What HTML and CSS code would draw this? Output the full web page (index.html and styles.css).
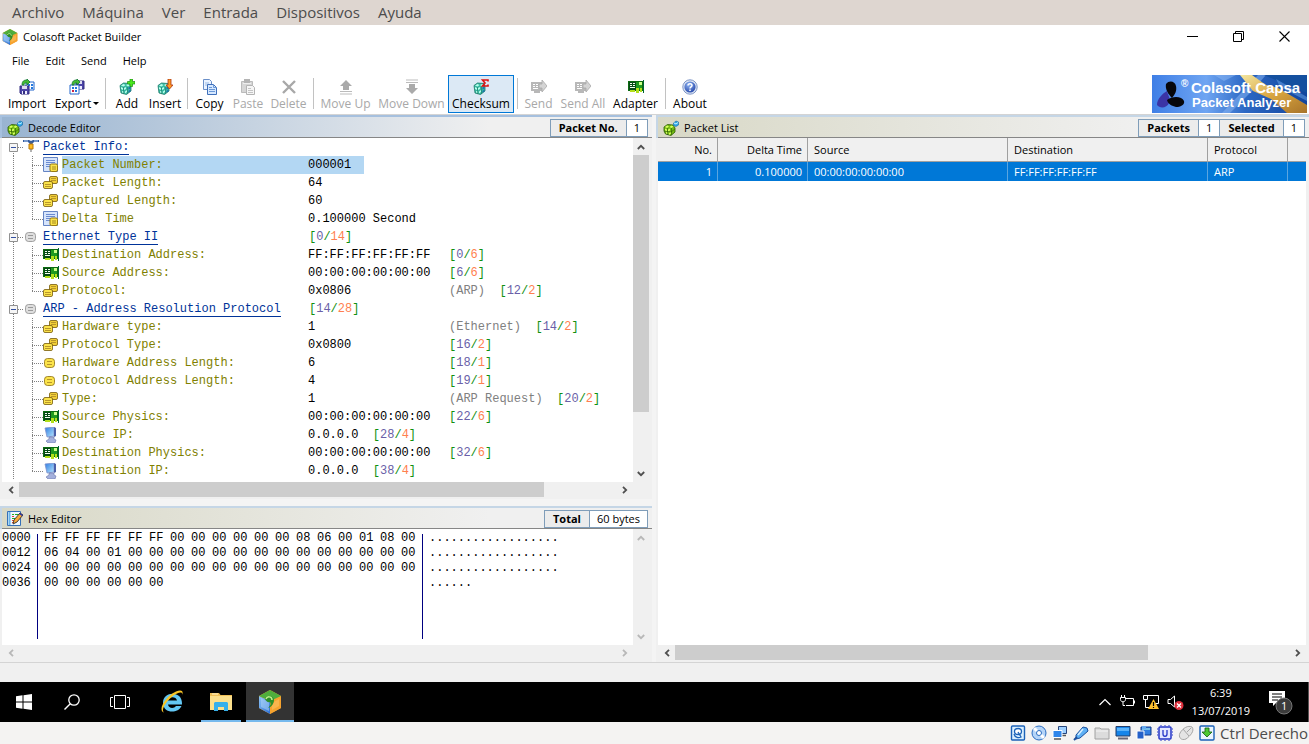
FILE: index.html
```html
<!DOCTYPE html>
<html lang="es">
<head>
<meta charset="utf-8">
<meta name="viewport" content="width=device-width, initial-scale=1">
<title>Colasoft Packet Builder</title>
<link rel="stylesheet" href="styles.css">
</head>
<body>
<svg class="defs" aria-hidden="true">
  <defs>
    <linearGradient id="g-app-l" x1="0" y1="0" x2="1" y2="1"><stop offset="0" stop-color="#8fc4f5"/><stop offset="1" stop-color="#2a6fd6"/></linearGradient>
    <linearGradient id="g-mon" x1="0" y1="0" x2="1" y2="1"><stop offset="0" stop-color="#2c7be0"/><stop offset="1" stop-color="#b7e6ff"/></linearGradient>
    <radialGradient id="g-about" cx=".4" cy=".3" r=".8"><stop offset="0" stop-color="#8fb4f2"/><stop offset="1" stop-color="#1d3fa5"/></radialGradient>
    <linearGradient id="g-gold" x1="0" y1="0" x2="1" y2="1"><stop offset="0" stop-color="#f3e6a0"/><stop offset=".5" stop-color="#d9a640"/><stop offset="1" stop-color="#a8742a"/></linearGradient>
    <linearGradient id="g-blue" x1="0" y1="0" x2="1" y2="0"><stop offset="0" stop-color="#3f7fe6"/><stop offset=".35" stop-color="#6fa5f2"/><stop offset=".6" stop-color="#2c68c4"/><stop offset="1" stop-color="#12459c"/></linearGradient>
  </defs>
  <symbol id="i-app" viewBox="0 0 24 24">
    <path d="M12 0 23 6v12l-11 6L1 18V6z" fill="#f49a28"/>
    <path d="M1 6l11 5v13L1 18z" fill="url(#g-app-l)"/>
    <path d="M23 6l-11 5v13l11-6z" fill="#f6a32f"/>
    <path d="M12 0 23 6l-11 5L1 6z" fill="#4fae3c"/>
    <path d="M3 8l8 4v9l-8-4z" fill="#b4d8fa" opacity=".5"/>
    <path d="M14 13l7-4v7l-7 4z" fill="#ffd07a" opacity=".4"/>
    <path d="M7 9c0-4 9-4 9 1 0 3-2 7-6 8 3-3 3-4 2-6-2 1-4-1-5-3z" fill="#2e8f2a"/>
    <path d="M8 9c1-3 6-3 6 1" stroke="#bdf08c" stroke-width="1.500" fill="none"/>
  </symbol>
  <symbol id="s-cube" viewBox="0 0 16 16">
    <path d="M1 6.500L4.500 4 11 4.500 12 8v4l-4.500 3.500L2 14z" fill="#36b8a0" stroke="#1c7a6a" stroke-width=".8"/>
    <path d="M2 6.500L4.500 5l2 1-2 1.500zM7 6l2-1 2 1-2 1.500zM2 8l2 1v2l-2-1zM5 9l2-1v2l-2 1zM3 12l2 .5V14l-2-.5zM6 12.500L8 11v2l-2 1.500z" fill="#b8ffec"/>
    <path d="M9.500 8.500l2-1v2l-2 1zM9.500 12l2-1.500v2l-2 1z" fill="#1c70b0"/>
    <path d="M4.500 8v7M8.500 8v7" stroke="#1c7a6a" stroke-width=".6"/>
  </symbol>
  <symbol id="i-cubes" viewBox="0 0 16 16">
    <path d="M1 7l3.500-2.500L10 5l2 3v4l-4 3.500L2.500 14 1 11z" fill="#74bc12" stroke="#2c5a04" stroke-width=".8"/>
    <path d="M2 7l2-1.500 2 1-2 1.500zM6.500 7l2-1.500 2 1-2 1.500zM2 8.500l2 1v2l-2-1zM5 9.500l2-1v2l-2 1zM3 12l2 .5V14l-2-.5zM6 13l2-1.500v2L6 15z" fill="#d8ff60"/>
    <path d="M4.500 8v7M8.500 8v7M1 11l7 1 4-3" stroke="#2c5a04" stroke-width=".6" fill="none"/>
    <path d="M10.500 3L13 1l2.500 1v3L13 6.500l-2.500-1z" fill="#2ea6e8" stroke="#186aa0" stroke-width=".6"/>
    <path d="M11 3l2 1 2-1.500" stroke="#c8f4ff" fill="none"/>
  </symbol>
  <symbol id="i-import" viewBox="0 0 16 16">
    <path d="M7 3h8v8H7z" fill="#fff" stroke="#26c"/>
    <path d="M9 5h2v2H9zM12 5h2v2h-2zM12 8h2v2h-2z" fill="#27d"/>
    <path d="M1 7h9v8H2l-1-1z" fill="#4c44a8" stroke="#332c80"/><path d="M3 7h5v3H3z" fill="#dde"/><path d="M3 12h5v3H3z" fill="#eef"/><path d="M4 12h2v3H4z" fill="#332c80"/>
    <path d="M3 6c0-4 2-5 5-5V0l3 3-3 3V4C6 4 5 4 5 6z" fill="#4b3" stroke="#173" stroke-width=".8"/>
  </symbol>
  <symbol id="i-export" viewBox="0 0 16 16">
    <path d="M7 2h8v8H8L7 9z" fill="#4c44a8" stroke="#332c80"/><path d="M9 2h4v3H9z" fill="#dde"/><path d="M9 7h4v3H9z" fill="#eef"/>
    <path d="M1 6h9v9H1z" fill="#fff" stroke="#26c"/>
    <path d="M3 8h2v2H3zM6 8h2v2H6zM6 11h2v2H6z" fill="#27d"/><path d="M3 11h2v2H3z" fill="#c24"/>
    <path d="M3 6c0-4 2-5 5-5V0l3 3-3 3V4C6 4 5 4 5 6z" fill="#4b3" stroke="#173" stroke-width=".8"/>
  </symbol>
  <symbol id="i-add" viewBox="0 0 16 16"><use href="#s-cube" width="16" height="16"/><path d="M11 0h2.500v2.500H16V5h-2.500v2.500H11V5H8.500V2.500H11z" fill="#4be81c" stroke="#1a8a12" stroke-width=".7"/></symbol>
  <symbol id="i-insert" viewBox="0 0 16 16"><use href="#s-cube" width="16" height="16"/><path d="M11 0h3v6h2l-3.500 4L9 6h2z" fill="#f92" stroke="#a31" stroke-width=".8"/></symbol>
  <symbol id="i-sum" viewBox="0 0 16 16"><use href="#s-cube" width="16" height="16"/><path d="M15 2.500V1H9.500l2.500 3-2.500 3H15V5.500" fill="none" stroke="#d11" stroke-width="1.600"/></symbol>
  <symbol id="i-copy" viewBox="0 0 16 16"><path d="M1.500.5h6l2 2v8h-8z" fill="#eaf3ff" stroke="#6a8fc8"/><path d="M3 4h4M3 6h4" stroke="#9bbbe6"/><path d="M5.500 5.500h6l3 3v7h-9z" fill="#d6e8ff" stroke="#3f70bb"/><path d="M11.500 5.500v3h3M7 8.500h3M7 10.500h6M7 12.500h6" stroke="#6b99d8" fill="none"/></symbol>
  <symbol id="i-paste" viewBox="0 0 16 16"><path d="M1.500 2.500h11v11h-11z" fill="#d6d6d6" stroke="#bbb"/><path d="M4 0h6v4H4z" fill="#b4b4b4"/><path d="M3 4h8v1H3z" fill="#eee"/><path d="M6.500 6.500h6l2 2v7h-8z" fill="#f6f6f6" stroke="#b4b4b4"/><path d="M8 9.500h3M8 11.500h5M8 13.500h5" stroke="#c4c4c4"/></symbol>
  <symbol id="i-del" viewBox="0 0 16 16"><path d="M2 2l12 12M14 2L2 14" stroke="#a8a8a8" stroke-width="2.400"/></symbol>
  <symbol id="i-up" viewBox="0 0 16 16"><path d="M8 1l6 6h-3v4H5V7H2z" fill="#aaa"/><path d="M2 12.500h12M2 15h12" stroke="#bbb"/></symbol>
  <symbol id="i-down" viewBox="0 0 16 16"><path d="M8 15l6-6h-3V5H5v4H2z" fill="#aaa"/><path d="M2 1h12M2 3.500h12" stroke="#bbb"/></symbol>
  <symbol id="i-send" viewBox="0 0 16 16"><path d="M0 3h12v9H0z" fill="#b8b8b8"/><path d="M2 5h2v1H2zM5 5h2v1H5zM2 7h2v1H2zM5 7h2v1H5zM2 9h5v1H2z" fill="#fff"/><path d="M8 5h3V1l5 6-5 6V9H8z" fill="#d4d4d4" stroke="#a8a8a8" stroke-width=".8"/><path d="M3 12h6v2H3z" fill="#b8b8b8"/></symbol>
  <symbol id="i-card" viewBox="0 0 16 16"><path d="M0 2h15v10H0z" fill="#0c6a10"/><path d="M1 3h13v8H1z" fill="#1f9a1f"/><path d="M1 3h7v8H1z" fill="#064a16"/><path d="M2 4h2v1H2zM5 4h2v1H5zM2 6h2v1H2zM5 6h2v1H5zM2 8h5v1H2z" fill="#f4fff0"/><path d="M11 3h3v3h-3z" fill="#cf8"/><path d="M2 11h5v2H2zM8 9h3v5H8zM12 9h2v4h-2z" fill="#b3e01c"/><path d="M15 1h1v13h-1z" fill="#063"/></symbol>
  <symbol id="i-about" viewBox="0 0 16 16"><circle cx="8" cy="8" r="7.200" fill="#dfe7f5" stroke="#7d95c6"/><circle cx="8" cy="8" r="5.600" fill="url(#g-about)"/><path d="M6 6.500C6 4 10.200 4 10 6.500c0 1.300-2 1.400-2 3M8 10.500V12" fill="none" stroke="#fff" stroke-width="1.500"/></symbol>
  <symbol id="i-hexed" viewBox="0 0 16 16"><path d="M.5.5h13v14H.5z" fill="#eef6ff" stroke="#3570b8"/><path d="M2.500 1v13" stroke="#6bb4e8" stroke-width="2"/><path d="M5 3.500h2M8 3.500h4M5 7.500h3" stroke="#2a2"/><path d="M5 5.500h2M5 9.500h2M5 11.500h4" stroke="#d43"/><path d="M6 13l1-4 6-7 3 2-6 7z" fill="#f9a83a" stroke="#333" stroke-width=".9"/><path d="M12.500 2.500l3 2" stroke="#23a" stroke-width="1.500"/></symbol>
  <symbol id="i-tee" viewBox="0 0 16 16"><path d="M0 1h6l2 1 2-1h6v2h-5l-2 2H7L5 3H0z" fill="#345b9c"/><path d="M1 2h4M11 2h4" stroke="#bcd8ff"/><path d="M6 5h4v5H6z" fill="#fb2" stroke="#b87808"/><path d="M7.500 3h1v2h-1zM7.500 10h1v3h-1z" fill="#666"/></symbol>
  <symbol id="i-doc" viewBox="0 0 16 16"><path d="M.5.5h14v14H.5z" fill="#d6e4fb" stroke="#6584c4"/><path d="M3 3.500h9M3 5.500h9M3 7.500h9M3 9.500h4" stroke="#6b8bd0"/><rect x="7" y="7" width="7.500" height="7.500" rx="1.500" fill="#fbe34a" stroke="#987a10"/><path d="M9 10h4M9 12h4" stroke="#a58a20"/></symbol>
  <symbol id="i-two" viewBox="0 0 16 16"><rect x="6.500" y="1.500" width="8" height="7" rx="1.500" fill="#f2cf36" stroke="#755b0c" stroke-width=".8"/><path d="M8 3.500h5M8 5.500h5" stroke="#b8962a"/><rect x=".5" y="6.500" width="9" height="7" rx="1.500" fill="#fbe34a" stroke="#755b0c" stroke-width=".8"/><path d="M2 9.500h6M2 11.500h6" stroke="#b8962a"/></symbol>
  <symbol id="i-one" viewBox="0 0 16 16"><rect x="1.500" y="3.500" width="10" height="9" rx="3" fill="#fbe34a" stroke="#8a6c10" stroke-width=".8"/><path d="M4 6.500h5M4 9.500h5" stroke="#b8962a"/></symbol>
  <symbol id="i-grey" viewBox="0 0 16 16"><rect x="2.500" y="3.500" width="10" height="9" rx="3" fill="#dedede" stroke="#8c8c8c" stroke-width=".8"/><path d="M5 6.500h5M5 9.500h5" stroke="#999"/></symbol>
  <symbol id="i-pc" viewBox="0 0 16 16"><path d="M2 1l9-1v9l-7 1z" fill="url(#g-mon)" stroke="#7d90cc" stroke-width=".8"/><path d="M11 0l2 1v8l-2 1z" fill="#4a5fa8"/><path d="M6 10h5v2l2 1-1 3H5l-2-2 3-2z" fill="#a4b0dc" stroke="#6a76ac" stroke-width=".6"/></symbol>
  <symbol id="i-minus" viewBox="0 0 9 9"><path d="M.5.5h8v8h-8z" fill="#f6f6f6" stroke="#919191"/><path d="M2 4.500h5" stroke="#3350a0"/></symbol>
  <symbol id="i-chev" viewBox="0 0 8 8"><path d="M.8 6L4 2.800 7.200 6" fill="none" stroke="currentColor" stroke-width="1.800"/></symbol>
</svg>

<nav class="vm-menu" aria-label="Máquina virtual">
  <a href="#">Archivo</a><a href="#">Máquina</a><a href="#">Ver</a><a href="#">Entrada</a><a href="#">Dispositivos</a><a href="#">Ayuda</a>
</nav>

<main class="app">
  <header class="titlebar">
    <svg class="ico16"><use href="#i-app"/></svg>
    <h1>Colasoft Packet Builder</h1>
    <div class="win-buttons">
      <button aria-label="Minimize"><svg width="11" height="11"><path d="M0 5.500h11" stroke="#000"/></svg></button>
      <button aria-label="Restore"><svg width="11" height="11"><path d="M.5 2.500h8v8h-8zM2.500 2.500v-2h8v8h-2" fill="none" stroke="#000"/></svg></button>
      <button aria-label="Close"><svg width="11" height="11"><path d="M.5.500l10 10M10.500.500l-10 10" stroke="#000" stroke-width="1.100"/></svg></button>
    </div>
  </header>

  <nav class="menu" aria-label="Menu"><a href="#">File</a><a href="#">Edit</a><a href="#">Send</a><a href="#">Help</a></nav>

  <div class="toolbar" role="toolbar">
    <button><svg class="ico16"><use href="#i-import"/></svg><span>Import</span></button>
    <button><svg class="ico16"><use href="#i-export"/></svg><span class="drop">Export</span></button>
    <i class="sep"></i>
    <button><svg class="ico16"><use href="#i-add"/></svg><span>Add</span></button>
    <button><svg class="ico16"><use href="#i-insert"/></svg><span>Insert</span></button>
    <i class="sep"></i>
    <button><svg class="ico16"><use href="#i-copy"/></svg><span>Copy</span></button>
    <button disabled><svg class="ico16"><use href="#i-paste"/></svg><span>Paste</span></button>
    <button disabled><svg class="ico16"><use href="#i-del"/></svg><span>Delete</span></button>
    <i class="sep"></i>
    <button disabled><svg class="ico16"><use href="#i-up"/></svg><span>Move Up</span></button>
    <button disabled><svg class="ico16"><use href="#i-down"/></svg><span>Move Down</span></button>
    <button class="pressed" aria-pressed="true"><svg class="ico16"><use href="#i-sum"/></svg><span>Checksum</span></button>
    <i class="sep"></i>
    <button disabled><svg class="ico16"><use href="#i-send"/></svg><span>Send</span></button>
    <button disabled><svg class="ico16"><use href="#i-send"/></svg><span>Send All</span></button>
    <button><svg class="ico16"><use href="#i-card"/></svg><span>Adapter</span></button>
    <i class="sep"></i>
    <button><svg class="ico16"><use href="#i-about"/></svg><span>About</span></button>
    <svg class="brand" width="155" height="38" viewBox="0 0 155 38" role="img" aria-label="Colasoft Capsa Packet Analyzer">
      <rect width="155" height="38" fill="url(#g-blue)"/>
      <path d="M62 0l10 6 12-6zM78 38l22-22 14-16h-8L70 38z" fill="#8dbaf5" opacity=".5"/>
      <path d="M88 0h12l14 10 12 3 29 17v8h-20l-16-14-18-8z" fill="url(#g-gold)"/>
      <path d="M112 0h43v18l-22-9z" fill="#14509f"/>
      <path d="M124 4l31 18v4l-27-14z" fill="#5f9ae0" opacity=".6"/>
      <path d="M14 9c3-4 9-3 10 2 1 5-1 8-4 12-4-4-7-9-6-14z" fill="#07070c"/>
      <path d="M15 16c1 5 4 7 2 12-2 5-9 6-12 2 0-6 5-11 10-14z" fill="#3b34a6"/>
      <path d="M15 25c5-4 15-4 17 1 1 4-4 6-8 6-4-1-8-3-9-7z" fill="#07070c"/>
      <text class="brand-r" x="29" y="12">®</text>
      <text class="brand-a" x="39" y="18">Colasoft Capsa</text>
      <text class="brand-b" x="40" y="32">Packet Analyzer</text>
    </svg>
  </div>

  <div class="work">
    <div class="left">
      <section class="panel decode">
        <div class="phead active">
          <svg class="ico16"><use href="#i-cubes"/></svg><h2>Decode Editor</h2>
          <dl class="badge"><dt>Packet No.</dt><dd>1</dd></dl>
        </div>
        <div class="pane">
          <ul class="tree" role="tree">
            <li class="node root first"><svg class="box"><use href="#i-minus"/></svg><svg class="ico16"><use href="#i-tee"/></svg><span class="name">Packet Info:</span></li>
            <li class="node leaf sel"><svg class="ico16"><use href="#i-doc"/></svg><span class="name">Packet Number:</span><span class="val">000001</span></li>
            <li class="node leaf"><svg class="ico16"><use href="#i-two"/></svg><span class="name">Packet Length:</span><span class="val">64</span></li>
            <li class="node leaf"><svg class="ico16"><use href="#i-two"/></svg><span class="name">Captured Length:</span><span class="val">60</span></li>
            <li class="node leaf end"><svg class="ico16"><use href="#i-doc"/></svg><span class="name">Delta Time</span><span class="val">0.100000 Second</span></li>
            <li class="node root"><svg class="box"><use href="#i-minus"/></svg><svg class="ico16"><use href="#i-grey"/></svg><span class="name">Ethernet Type II</span><span class="val"><i>[<b>0</b>/<em>14</em>]</i></span></li>
            <li class="node leaf"><svg class="ico16"><use href="#i-card"/></svg><span class="name">Destination Address:</span><span class="val">FF:FF:FF:FF:FF:FF</span><span class="val"><i>[<b>0</b>/<em>6</em>]</i></span></li>
            <li class="node leaf"><svg class="ico16"><use href="#i-card"/></svg><span class="name">Source Address:</span><span class="val">00:00:00:00:00:00</span><span class="val"><i>[<b>6</b>/<em>6</em>]</i></span></li>
            <li class="node leaf end"><svg class="ico16"><use href="#i-two"/></svg><span class="name">Protocol:</span><span class="val">0x0806</span><span class="val"><s>(ARP)</s>  <i>[<b>12</b>/<em>2</em>]</i></span></li>
            <li class="node root"><svg class="box"><use href="#i-minus"/></svg><svg class="ico16"><use href="#i-grey"/></svg><span class="name">ARP - Address Resolution Protocol</span><span class="val"><i>[<b>14</b>/<em>28</em>]</i></span></li>
            <li class="node leaf"><svg class="ico16"><use href="#i-two"/></svg><span class="name">Hardware type:</span><span class="val">1</span><span class="val"><s>(Ethernet)</s>  <i>[<b>14</b>/<em>2</em>]</i></span></li>
            <li class="node leaf"><svg class="ico16"><use href="#i-two"/></svg><span class="name">Protocol Type:</span><span class="val">0x0800</span><span class="val"><i>[<b>16</b>/<em>2</em>]</i></span></li>
            <li class="node leaf"><svg class="ico16"><use href="#i-one"/></svg><span class="name">Hardware Address Length:</span><span class="val">6</span><span class="val"><i>[<b>18</b>/<em>1</em>]</i></span></li>
            <li class="node leaf"><svg class="ico16"><use href="#i-one"/></svg><span class="name">Protocol Address Length:</span><span class="val">4</span><span class="val"><i>[<b>19</b>/<em>1</em>]</i></span></li>
            <li class="node leaf"><svg class="ico16"><use href="#i-two"/></svg><span class="name">Type:</span><span class="val">1</span><span class="val"><s>(ARP Request)</s>  <i>[<b>20</b>/<em>2</em>]</i></span></li>
            <li class="node leaf"><svg class="ico16"><use href="#i-card"/></svg><span class="name">Source Physics:</span><span class="val">00:00:00:00:00:00</span><span class="val"><i>[<b>22</b>/<em>6</em>]</i></span></li>
            <li class="node leaf"><svg class="ico16"><use href="#i-pc"/></svg><span class="name">Source IP:</span><span class="val">0.0.0.0  <i>[<b>28</b>/<em>4</em>]</i></span></li>
            <li class="node leaf"><svg class="ico16"><use href="#i-card"/></svg><span class="name">Destination Physics:</span><span class="val">00:00:00:00:00:00</span><span class="val"><i>[<b>32</b>/<em>6</em>]</i></span></li>
            <li class="node leaf end"><svg class="ico16"><use href="#i-pc"/></svg><span class="name">Destination IP:</span><span class="val">0.0.0.0  <i>[<b>38</b>/<em>4</em>]</i></span></li>
          </ul>
          <div class="vbar"><button aria-label="Scroll up"><svg class="chev"><use href="#i-chev"/></svg></button><div class="track"><div class="thumb tall"></div></div><button aria-label="Scroll down"><svg class="chev down"><use href="#i-chev"/></svg></button></div>
        </div>
        <div class="hbar"><button aria-label="Scroll left"><svg class="chev lft"><use href="#i-chev"/></svg></button><div class="track"><div class="thumb wide"></div></div><button aria-label="Scroll right"><svg class="chev rgt"><use href="#i-chev"/></svg></button></div>
      </section>

      <section class="panel hex">
        <div class="phead">
          <svg class="ico16"><use href="#i-hexed"/></svg><h2>Hex Editor</h2>
          <dl class="badge"><dt>Total</dt><dd>60 bytes</dd></dl>
        </div>
        <div class="pane">
          <div class="dump">
            <pre class="offsets">0000
0012
0024
0036</pre>
            <div class="rule"></div>
            <div class="bytes">
              <span>FF</span><span>FF</span><span>FF</span><span>FF</span><span>FF</span><span>FF</span><span>00</span><span>00</span><span>00</span><span>00</span><span>00</span><span>00</span><span>08</span><span>06</span><span>00</span><span>01</span><span>08</span><span>00</span>
              <span>06</span><span>04</span><span>00</span><span>01</span><span>00</span><span>00</span><span>00</span><span>00</span><span>00</span><span>00</span><span>00</span><span>00</span><span>00</span><span>00</span><span>00</span><span>00</span><span>00</span><span>00</span>
              <span>00</span><span>00</span><span>00</span><span>00</span><span>00</span><span>00</span><span>00</span><span>00</span><span>00</span><span>00</span><span>00</span><span>00</span><span>00</span><span>00</span><span>00</span><span>00</span><span>00</span><span>00</span>
              <span>00</span><span>00</span><span>00</span><span>00</span><span>00</span><span>00</span>
            </div>
            <div class="rule"></div>
            <pre class="ascii">..................
..................
..................
......</pre>
          </div>
          <div class="vbar off"><button disabled aria-label="Scroll up"><svg class="chev"><use href="#i-chev"/></svg></button><div class="track"></div><button disabled aria-label="Scroll down"><svg class="chev down"><use href="#i-chev"/></svg></button></div>
        </div>
        <div class="hbar off"><button disabled aria-label="Scroll left"><svg class="chev lft"><use href="#i-chev"/></svg></button><div class="track"></div><button disabled aria-label="Scroll right"><svg class="chev rgt"><use href="#i-chev"/></svg></button></div>
      </section>
    </div>

    <section class="panel list">
      <div class="phead">
        <svg class="ico16"><use href="#i-cubes"/></svg><h2>Packet List</h2>
        <dl class="badge"><dt>Packets</dt><dd>1</dd><dt>Selected</dt><dd>1</dd></dl>
      </div>
      <div class="pane">
        <table>
          <colgroup><col class="c-no"><col class="c-time"><col class="c-addr"><col class="c-addr"><col class="c-proto"><col></colgroup>
          <thead><tr><th class="num">No.</th><th class="num">Delta Time</th><th>Source</th><th>Destination</th><th>Protocol</th><th></th></tr></thead>
          <tbody><tr><td class="num">1</td><td class="num">0.100000</td><td>00:00:00:00:00:00</td><td>FF:FF:FF:FF:FF:FF</td><td>ARP</td><td></td></tr></tbody>
        </table>
      </div>
      <div class="hbar"><button aria-label="Scroll left"><svg class="chev lft"><use href="#i-chev"/></svg></button><div class="track"><div class="thumb most"></div></div><button aria-label="Scroll right"><svg class="chev rgt"><use href="#i-chev"/></svg></button></div>
    </section>
  </div>
  <div class="status"></div>
</main>

<footer class="taskbar">
  <div class="tasks">
    <button aria-label="Start"><svg width="16" height="16"><path d="M0 2.200L6.500 1.300v6.200H0zM7.500 1.200L16 0v7.500H7.500zM0 8.500h6.500v6.200L0 13.800zM7.500 8.500H16V16l-8.500-1.200z" fill="#fff"/></svg></button>
    <button aria-label="Search"><svg width="16" height="16"><circle cx="10" cy="6" r="5.200" fill="none" stroke="#fff" stroke-width="1.300"/><path d="M6.300 9.700L.500 15.500" stroke="#fff" stroke-width="1.400"/></svg></button>
    <button aria-label="Task view"><svg width="20" height="14"><path d="M4.500.5h11v13h-11zM3 2.500H.500v9H3M17 2.500h2.500v9H17" fill="none" stroke="#fff"/></svg></button>
  </div>
  <div class="tasks">
    <button aria-label="Internet Explorer"><svg width="24" height="24"><path d="M22 14.500H8c.5 4 6 4.500 8 1.500h5.500C18 24 3 24 3 12.500 3 1 23 0 22 14.500zM8 10.500h9C16.500 6 8.500 6 8 10.500z" fill="#63c8f5" fill-rule="evenodd"/><path d="M4 22.500c-7-2 2-17 12-21 5-2 8-1 6 4 1-3-1-4-5-2C8 8 0 20 4 22.500z" fill="#f9c526"/></svg></button>
    <button class="open" aria-label="File Explorer"><svg width="22" height="20"><path d="M0 1h9l1.500 2H22v15H0z" fill="#f0c057"/><path d="M0 4h22v14H0z" fill="#fce08c"/><path d="M2 2h6" stroke="#fff6cf"/><path d="M4 19v-8l1-1h12l1 1v8h-4v-4H8v4z" fill="#36b0ea"/></svg></button>
    <button class="open current" aria-label="Colasoft Packet Builder"><svg width="24" height="24"><use href="#i-app"/></svg></button>
  </div>
  <div class="tray">
    <svg width="12" height="12"><path d="M.500 9L6 3.500 11.500 9" fill="none" stroke="#fff" stroke-width="1.200"/></svg>
    <svg width="16" height="14"><path d="M6 3.500h8.500v7H7M15.500 5.500v3M1.500 2.500v2c0 3 5 3 5 0v-2zM2.500 0v2M5.500 0v2M4 7v3.500h2" fill="none" stroke="#fff"/></svg>
    <svg width="16" height="16"><path d="M3.500 1.500h12v8h-5M.500 1.500h4v4h-4zM2.500 5v8.500h4M6 13.500h3" fill="none" stroke="#fff"/><path d="M10.500 5L16 15H5z" fill="#fdc02f"/><path d="M10.500 8v4M10.500 13v1" stroke="#000" stroke-width="1.200"/></svg>
    <svg width="17" height="16"><path d="M1 5.500h2.500L7.500 2v11L3.500 9.500H1z" fill="none" stroke="#fff"/><circle cx="12" cy="11.500" r="4.500" fill="#dc2f3c"/><path d="M10 9.500l4 4M14 9.500l-4 4" stroke="#fff" stroke-width="1.300"/></svg>
    <div class="clock"><time>6:39</time><time datetime="2019-07-13">13/07/2019</time></div>
    <svg width="26" height="26"><path d="M1 2h16v12H8l-3 3v-3H1z" fill="#fff"/><path d="M4 5h10M4 8h10M4 11h6" stroke="#000"/><circle cx="16" cy="17" r="8" fill="#3c3c3c" stroke="#777"/><text class="count" x="13" y="21">1</text></svg>
  </div>
</footer>

<footer class="vm-status">
  <svg class="ico16" viewBox="0 0 16 16"><rect x="1.500" y="1" width="13" height="14" rx="1" fill="#d9efff" stroke="#1b62b8" stroke-width="1.400"/><ellipse cx="8" cy="6.500" rx="3.500" ry="3" fill="#fff" stroke="#1b62b8" stroke-width="1.300"/><path d="M4 9c1 4 5 4 7 3L8 7" fill="none" stroke="#1b62b8" stroke-width="1.300"/></svg>
  <svg class="ico16" viewBox="0 0 16 16"><circle cx="8" cy="8" r="7" fill="#b4d4f8" stroke="#2a6cc0"/><path d="M8 8L3 3M8 8l5 5" stroke="#fff" stroke-width="3"/><circle cx="8" cy="8" r="2.500" fill="#fff" stroke="#2a6cc0"/></svg>
  <svg class="ico16" viewBox="0 0 16 16"><path d="M6.500 1.500h8v7h-8z" fill="#9fd0ff" stroke="#26457c"/><path d="M9 10.500h5" stroke="#555" stroke-width="1.500"/><path d="M1 5.500h9v7H1z" fill="#2f86ea" stroke="#fff"/><path d="M2 14h7" stroke="#555" stroke-width="1.500"/></svg>
  <svg class="ico16" viewBox="0 0 16 16"><path d="M3 10l7-8 4 1 1 3-8 7-4 1z" fill="#5eb0f4" stroke="#1b4f9c"/><path d="M1 15l3-3" stroke="#1b4f9c" stroke-width="2"/><path d="M5 10l5-6" stroke="#d8f0ff" stroke-width="1.500"/></svg>
  <svg class="ico16" viewBox="0 0 16 16"><path d="M1 3h5l1 1h8v10H1z" fill="#dcdcdc" stroke="#a2a2a2"/><path d="M2 6h12" stroke="#f5f5f5"/></svg>
  <svg class="ico16" viewBox="0 0 16 16"><path d="M1 1.500h14v9.500H1z" fill="#1585ea" stroke="#223a66"/><path d="M2 3h12v3H2z" fill="#5bb3fa"/><path d="M3 13.500h10" stroke="#667" stroke-width="2"/></svg>
  <svg class="ico16" viewBox="0 0 16 16"><path d="M5 2h10v8H5z" fill="#337ee0" stroke="#123b8c"/><path d="M6 4h8" stroke="#bfe"/><path d="M1 6h7v8H1z" fill="#2561c9" stroke="#fff"/><path d="M6 1h4v3H6z" fill="#6ae"/></svg>
  <svg class="ico16" viewBox="0 0 16 16"><rect x="2" y="2" width="12" height="12" rx="1" fill="#e4e8ff" stroke="#2436c8" stroke-width="1.500"/><path d="M6 5v4c0 3 4 3 4 0V5" fill="none" stroke="#2436c8" stroke-width="1.300"/><path d="M0 4h1M0 7h1M0 10h1M15 4h1M15 7h1M15 10h1M4 0v1M8 0v1M12 0v1M4 15v1M8 15v1M12 15v1" stroke="#2436c8"/></svg>
  <svg class="ico16" viewBox="0 0 16 16"><path d="M2 8c3-5 8-8 12-6 3 4-2 9-6 12-5 2-8-2-6-6z" fill="#e4e4e4" stroke="#a5a5a5"/><path d="M5 4l6 7M9 7l4-4" stroke="#a5a5a5"/></svg>
  <svg class="ico16" viewBox="0 0 16 16"><rect x="1" y="1" width="14" height="14" rx="1" fill="#eaf6ff" stroke="#1b62b8" stroke-width="1.400"/><path d="M6 3h4v4h3l-5 5-5-5h3z" fill="#4cc832" stroke="#155c10" stroke-width=".8"/></svg>
  <span>Ctrl Derecho</span>
</footer>
</body>
</html>
```

FILE: styles.css
```css
:root {
  --ui: "Open Sans", "Noto Sans", sans-serif;
  --mono: "Liberation Mono", monospace;
  --face: #f0f0f0;
}

* { box-sizing: border-box; }

body {
  margin: 0;
  min-height: 100vh;
  display: flex;
  flex-direction: column;
  font: 11px/16px var(--ui);
  color: #000;
  background: var(--face);
}

h1, h2, ul, dl, dd, pre { margin: 0; padding: 0; }
h1, h2 { font-size: 11px; font-weight: 400; }
button { border: 0; padding: 0; background: none; font: inherit; color: inherit; }
a { color: inherit; text-decoration: none; }
svg { display: block; flex: none; }

.defs { position: absolute; width: 0; height: 0; }
.ico16 { width: 16px; height: 16px; }

/* Host window menu */
.vm-menu {
  display: flex;
  gap: 18px;
  padding: 0 12px;
  background: #ded6d0;
  color: #4c4c4c;
  font-size: 15px;
  line-height: 25px;
}

/* Guest application */
.app { flex: 1; display: flex; flex-direction: column; min-height: 0; }

.titlebar { display: flex; align-items: center; gap: 5px; height: 23px; padding-left: 2px; background: #fff; }
.win-buttons { display: flex; margin-left: auto; }
.win-buttons button { display: grid; place-items: center; width: 46px; height: 20px; }
.win-buttons button:last-child { margin-right: 2px; }

.menu { display: flex; gap: 16px; height: 26px; padding: 0 12px; line-height: 26px; background: #fff; }

.toolbar {
  display: grid;
  grid-template-columns: 50px 50px 6px 38px 38px 6px 39px 38px 43px 6px 59px 73px 66px 6px 37px 52px 53px 6px 44px 1fr;
  height: 41px;
  padding: 1px 2px 3px;
  background: #fff;
  border-bottom: 1px solid #d4d4d4;
}
.toolbar button {
  display: flex;
  flex-direction: column;
  align-items: center;
  gap: 1px;
  padding-top: 3px;
  border: 1px solid transparent;
  font-size: 12px;
  line-height: 15px;
  white-space: nowrap;
}
.toolbar button:disabled { color: #a8a8a8; }
.toolbar .pressed { background: #dce9f5; border-color: #0078d7; }
.sep { justify-self: center; width: 1px; height: 31px; margin-top: 3px; background: #c2c2c2; }
.drop { display: flex; align-items: center; gap: 2px; }
.drop::after { content: ""; border: 3px solid transparent; border-top-color: #000; border-bottom: 0; }
.brand { justify-self: end; }
.brand text { fill: #fff; font-family: "Liberation Sans", Arial, sans-serif; font-weight: 700; }
.brand .brand-r { font-size: 10px; }
.brand .brand-a { font-size: 15px; }
.brand .brand-b { font-size: 13px; }

.work {
  flex: 1;
  display: grid;
  grid-template-columns: minmax(0, 652fr) minmax(0, 653fr);
  gap: 4px;
  background: #f4f4f4;
}
.left { display: flex; flex-direction: column; gap: 7px; }
.panel { display: flex; flex-direction: column; background: var(--face); }
.hex { flex: 1; }

.phead {
  display: flex;
  align-items: center;
  gap: 5px;
  height: 23px;
  padding: 0 4px 0 5px;
  border: solid #c5d6e6;
  border-width: 2px 0 0 2px;
  background: linear-gradient(90deg, #d8d8c6, #f0f0f0 75%);
  box-shadow: inset 0 -1px #868686;
}
.phead.active { border-color: #a6c0de; background: linear-gradient(90deg, #99b4d1, #f0f0f0 75%); }
.badge { display: flex; margin-left: auto; height: 18px; border: 1px solid #7f9db9; background: #fff; line-height: 16px; }
.badge dt { padding: 0 8px; background: #ececec; font-weight: 700; }
.badge dd { padding: 0 7px; border-left: 1px solid #7f9db9; }
.badge dd + dt { border-left: 1px solid #7f9db9; }

.pane { flex: 1; display: flex; margin: 0 3px 0 2px; background: #fff; }
.list .pane { align-items: flex-start; }

/* Scroll bars */
.vbar { display: flex; flex-direction: column; width: 16px; margin-left: auto; background: var(--face); color: #505050; }
.hbar { display: flex; height: 17px; padding: 0 19px 0 2px; background: var(--face); color: #505050; }
.list .hbar { padding-right: 3px; }
.vbar button, .hbar button { display: grid; place-items: center; flex: none; width: 16px; height: 17px; }
.hbar button { width: 17px; height: 15px; }
.track { flex: 1; }
.thumb { background: #cdcdcd; }
.tall { height: 83%; }
.wide { width: 88%; height: 15px; }
.most { width: 77%; height: 15px; }
.off { color: #b8b8b8; }
.chev { width: 8px; height: 8px; }
.down { transform: rotate(180deg); }
.lft { transform: rotate(-90deg); }
.rgt { transform: rotate(90deg); }

/* Decode tree */
.tree { flex: 1; padding-bottom: 2px; list-style: none; font: 12px/18px var(--mono); }
.node {
  --dots-v: repeating-linear-gradient(#808080 0 1px, transparent 1px 2px);
  --dots-h: repeating-linear-gradient(90deg, #808080 0 1px, transparent 1px 2px);
  display: grid;
  align-items: center;
  height: 18px;
  white-space: pre;
}
.root {
  grid-template-columns: 10px 16px 262px auto;
  column-gap: 4px;
  justify-content: start;
  padding-left: 7px;
  background: var(--dots-v) 11px 0 / 1px 100% no-repeat, var(--dots-h) 16px 9px / 6px 1px no-repeat;
}
.root.first { background: var(--dots-v) 11px 9px / 1px 9px no-repeat, var(--dots-h) 16px 9px / 6px 1px no-repeat; }
.leaf {
  grid-template-columns: 19px 246px 141px auto;
  justify-content: start;
  padding-left: 41px;
  background: var(--dots-v) 11px 0 / 1px 100% no-repeat, var(--dots-v) 30px 0 / 1px 100% no-repeat, var(--dots-h) 30px 9px / 11px 1px no-repeat;
}
.leaf.end { background-size: 1px 100%, 1px 9px, 11px 1px; }
.leaf.sel { grid-template-columns: 19px 246px 56px; }
.box { width: 9px; height: 9px; }
.name { color: #808000; }
.root .name { justify-self: start; line-height: 14px; color: #003399; border-bottom: 1px solid #003399; }
.sel .name, .sel .val { background: #b3d7f3; }
.val i, .val b, .val em, .val s { font-style: normal; font-weight: 400; text-decoration: none; }
.val i { color: #109010; }
.val b { color: #6a5fa8; }
.val em { color: #ff7f50; }
.val s { color: #808080; }

/* Hex dump */
.dump { display: flex; padding-bottom: 6px; font: 12px/15px var(--mono); }
.dump pre { font: inherit; }
.dump > * { padding-top: 2px; }
.offsets { width: 35px; }
.rule { width: 1px; margin-top: 5px; background: #000080; }
.bytes { display: grid; grid-template-columns: repeat(18, 21px); grid-auto-rows: 15px; margin: 0 0 0 6px; }
.ascii { padding-left: 6px; }

/* Packet table */
table { width: 100%; border-collapse: separate; border-spacing: 0; table-layout: fixed; }
.c-no { width: 60px; }
.c-time { width: 90px; }
.c-addr { width: 200px; }
.c-proto { width: 80px; }
th, td { padding: 0 5px 0 6px; text-align: left; font-weight: 400; white-space: nowrap; }
th { height: 24px; background: var(--face); border-right: 1px solid #a0a0a0; border-bottom: 1px solid #a0a0a0; }
td { height: 19px; background: #0078d7; color: #fff; border-right: 1px solid #5aa5e0; }
.num { text-align: right; }
th:last-child, td:last-child { border-right: 0; }

.status { height: 20px; border-top: 1px solid #d4d4d4; }

/* Guest taskbar */
.taskbar { display: flex; gap: 4px; height: 40px; background: #000; color: #fff; }
.tasks { display: flex; gap: 1px; }
.tasks button { display: grid; place-items: center; width: 48px; }
.tasks:first-child { gap: 0; }
.open { background: linear-gradient(#76b9ed, #76b9ed) 50% 100% / 40px 2px no-repeat; }
.current { background-color: #333; background-size: 100% 2px; }
.tray { display: flex; align-items: center; gap: 8px; margin-left: auto; padding-right: 14px; border-right: 1px solid #555; }
.clock { display: flex; flex-direction: column; align-items: center; margin-right: 10px; line-height: 18px; }
.count { fill: #fff; font: 11px var(--ui); }

/* Host status bar */
.vm-status { display: flex; align-items: center; gap: 5px; height: 22px; padding-right: 1px; justify-content: flex-end; background: #f4f3f2; color: #4c4c4c; font-size: 15px; }
```
